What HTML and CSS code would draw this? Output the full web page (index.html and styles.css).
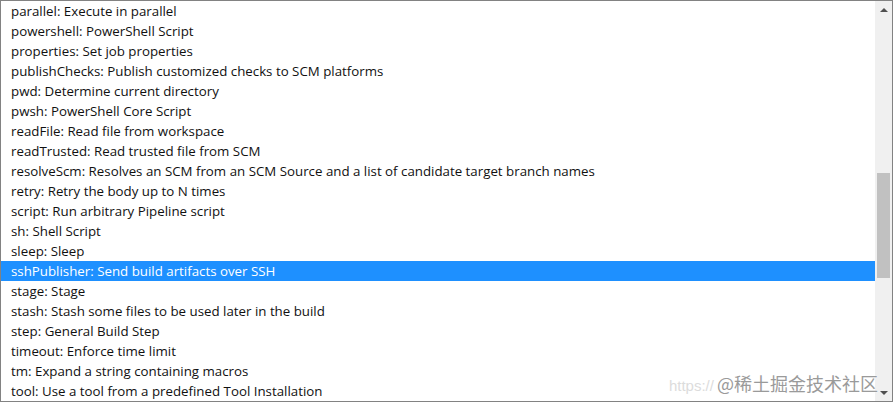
FILE: index.html
```html
<!DOCTYPE html>
<html lang="en">
<head>
<meta charset="utf-8">
<link rel="stylesheet" href="styles.css">
</head>
<body>
<div class="listbox">
  <ul class="list">
    <li class="row">parallel: Execute in parallel</li>
    <li class="row">powershell: PowerShell Script</li>
    <li class="row">properties: Set job properties</li>
    <li class="row">publishChecks: Publish customized checks to SCM platforms</li>
    <li class="row">pwd: Determine current directory</li>
    <li class="row">pwsh: PowerShell Core Script</li>
    <li class="row">readFile: Read file from workspace</li>
    <li class="row">readTrusted: Read trusted file from SCM</li>
    <li class="row">resolveScm: Resolves an SCM from an SCM Source and a list of candidate target branch names</li>
    <li class="row">retry: Retry the body up to N times</li>
    <li class="row">script: Run arbitrary Pipeline script</li>
    <li class="row">sh: Shell Script</li>
    <li class="row">sleep: Sleep</li>
    <li class="row selected">sshPublisher: Send build artifacts over SSH</li>
    <li class="row">stage: Stage</li>
    <li class="row">stash: Stash some files to be used later in the build</li>
    <li class="row">step: General Build Step</li>
    <li class="row">timeout: Enforce time limit</li>
    <li class="row">tm: Expand a string containing macros</li>
    <li class="row">tool: Use a tool from a predefined Tool Installation</li>
  </ul>
  <div class="scrollbar">
    <div class="arrow up"></div>
    <div class="track"><div class="thumb"></div></div>
    <div class="arrow down"></div>
  </div>
  <div class="watermark"><span class="wm-url">https://</span><span class="wm-text">@稀土掘金技术社区</span></div>
</div>
</body>
</html>
```
FILE: styles.css
```css
html, body {
  margin: 0;
  padding: 0;
  background: #fff;
}
.listbox {
  position: relative;
  box-sizing: border-box;
  width: 893px;
  height: 402px;
  border: 1px solid #828282;
  display: flex;
  overflow: hidden;
  font-family: "Open Sans", "Noto Sans", sans-serif;
  font-size: 13.3px;
  color: #111;
}
.list {
  flex: 1;
  margin: 0;
  padding: 0;
  list-style: none;
}
.row {
  height: 20px;
  line-height: 20px;
  padding-left: 10px;
  white-space: nowrap;
}
.row.selected {
  background: #1e90ff;
  color: #fff;
}
.scrollbar {
  width: 17px;
  background: #f0f0f0;
  display: flex;
  flex-direction: column;
}
.arrow {
  height: 17px;
  display: flex;
  align-items: center;
  justify-content: center;
}
.arrow::after {
  content: "";
  width: 0;
  height: 0;
  border-left: 4px solid transparent;
  border-right: 4px solid transparent;
}
.arrow.up::after {
  border-bottom: 4px solid #505050;
}
.arrow.down::after {
  border-top: 4px solid #505050;
}
.track {
  flex: 1;
  padding-top: 155px;
  display: flex;
  flex-direction: column;
}
.thumb {
  height: 105px;
  margin: 0 2px;
  background: #c1c1c1;
}
.watermark {
  position: absolute;
  right: 14px;
  bottom: 5px;
  display: flex;
  align-items: baseline;
  pointer-events: none;
}
.wm-url {
  font-family: "Liberation Sans", sans-serif;
  font-size: 15px;
  color: #dcdcdc;
  margin-right: 3px;
}
.wm-text {
  font-family: "Noto Sans CJK SC", sans-serif;
  font-size: 18px;
  color: #9a9a9a;
  text-shadow: 0 0 2px #fff, 0 0 1px #fff;
}
```
